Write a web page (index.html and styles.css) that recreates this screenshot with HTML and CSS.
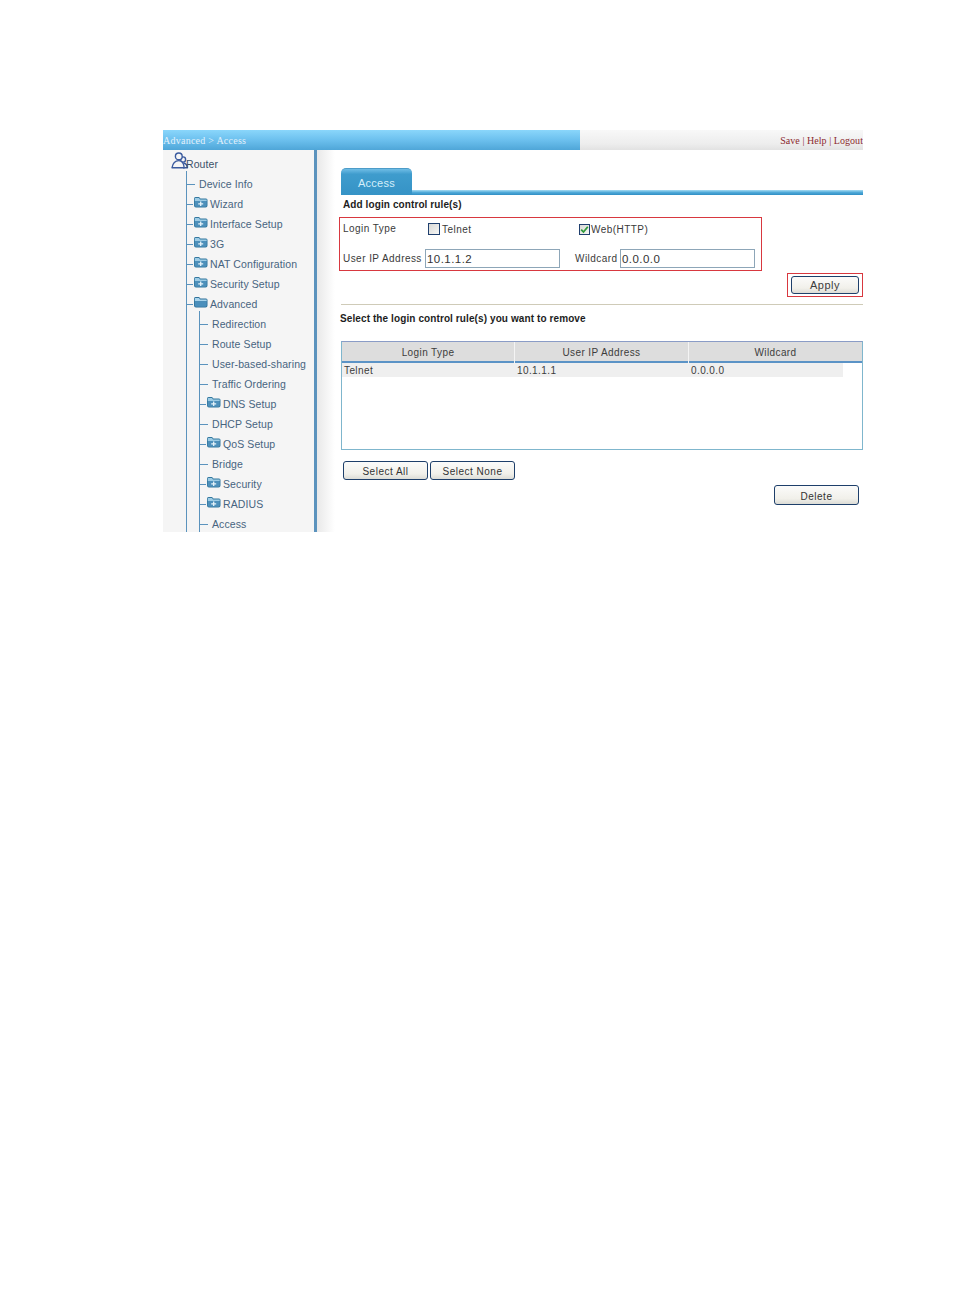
FILE: index.html
```html
<!DOCTYPE html>
<html lang="en">
<head>
<meta charset="utf-8">
<title>Advanced &gt; Access</title>
<link rel="stylesheet" href="styles.css">
</head>
<body>
<svg class="defs" width="0" height="0" aria-hidden="true">
  <symbol id="folder" viewBox="0 0 15 12">
    <path d="M1 2.5 Q1 1 2.5 1 H6 L7.5 2.5 H13 Q14.5 2.5 14.5 4 V9.5 Q14.5 11.5 12.5 11.5 H3 Q1 11.5 1 9.5 Z" fill="#34789f"/>
    <path d="M1.8 2 H6 L7 3.4 H13.7 V5 H1.8 Z" fill="#9ccbe4"/>
    <path d="M1.8 5 H13.7 V9.6 Q13.7 10.7 12.5 10.7 H3 Q1.8 10.7 1.8 9.6 Z" fill="#4d90bb"/>
    <path d="M5.2 7.8 H10.2 M7.7 5.6 V10" stroke="#e6f3fa" stroke-width="1.3" fill="none"/>
  </symbol>
  <symbol id="folder-open" viewBox="0 0 15 12">
    <path d="M1 2.5 Q1 1 2.5 1 H6 L7.5 2.5 H13 Q14.5 2.5 14.5 4 V9.5 Q14.5 11.5 12.5 11.5 H3 Q1 11.5 1 9.5 Z" fill="#2f7199"/>
    <path d="M1.8 2 H6 L7 3.4 H13.7 V5.2 H1.8 Z" fill="#a8d4ec"/>
    <path d="M1.8 5.2 H13.7 V9.6 Q13.7 10.7 12.5 10.7 H3 Q1.8 10.7 1.8 9.6 Z" fill="#4a8fbc"/>
  </symbol>
</svg>
<div class="shot">
  <header class="topbar">
    <div class="crumb">Advanced &gt; Access</div>
    <div class="links">Save | Help | Logout</div>
  </header>
  <div class="body">
    <nav class="sidebar">
      <div class="root">
        <svg class="root-icon" width="17" height="17" viewBox="0 0 17 17">
          <g fill="none" stroke="#3a5a9e" stroke-width="1.4" stroke-linejoin="round">
            <circle cx="12" cy="7.5" r="2.6"/>
            <path d="M12.5 11 Q16 11.6 16.3 15.8 H12"/>
            <circle cx="7.8" cy="4.4" r="3.4" fill="#f5f5f5"/>
            <path d="M1 15.8 Q2.2 8.6 7.8 8.6 Q12.6 8.6 13.2 15.8 Z" fill="#f5f5f5"/>
          </g>
        </svg>
        <span>Router</span>
      </div>
      <ul class="tree">
        <li class="leaf"><i class="stub"></i>Device Info</li>
        <li class="dir"><i class="stub"></i><svg class="ico"><use href="#folder"/></svg>Wizard</li>
        <li class="dir"><i class="stub"></i><svg class="ico"><use href="#folder"/></svg>Interface Setup</li>
        <li class="dir"><i class="stub"></i><svg class="ico"><use href="#folder"/></svg>3G</li>
        <li class="dir"><i class="stub"></i><svg class="ico"><use href="#folder"/></svg>NAT Configuration</li>
        <li class="dir"><i class="stub"></i><svg class="ico"><use href="#folder"/></svg>Security Setup</li>
        <li class="dir"><i class="stub"></i><svg class="ico"><use href="#folder-open"/></svg>Advanced</li>
        <li>
          <ul class="tree sub">
            <li class="leaf"><i class="stub"></i>Redirection</li>
            <li class="leaf"><i class="stub"></i>Route Setup</li>
            <li class="leaf"><i class="stub"></i>User-based-sharing</li>
            <li class="leaf"><i class="stub"></i>Traffic Ordering</li>
            <li class="dir"><i class="stub"></i><svg class="ico"><use href="#folder"/></svg>DNS Setup</li>
            <li class="leaf"><i class="stub"></i>DHCP Setup</li>
            <li class="dir"><i class="stub"></i><svg class="ico"><use href="#folder"/></svg>QoS Setup</li>
            <li class="leaf"><i class="stub"></i>Bridge</li>
            <li class="dir"><i class="stub"></i><svg class="ico"><use href="#folder"/></svg>Security</li>
            <li class="dir"><i class="stub"></i><svg class="ico"><use href="#folder"/></svg>RADIUS</li>
            <li class="leaf"><i class="stub"></i>Access</li>
          </ul>
        </li>
      </ul>
    </nav>
    <main class="main">
      <div class="tabbar">
        <div class="tab">Access</div>
        <div class="tabline"></div>
      </div>
      <h2 class="title indent">Add login control rule(s)</h2>
      <form class="redbox form">
        <span class="lead">Login Type</span>
        <label class="check telnet"><i class="box"></i>Telnet</label>
        <label class="check web">
          <i class="box on"><svg width="9" height="9" viewBox="0 0 9 9"><path d="M1.2 4.6 L3.5 7 L7.8 1.8" fill="none" stroke="#2f9a3a" stroke-width="1.8"/></svg></i>Web(HTTP)
        </label>
        <span class="low">User IP Address</span>
        <div class="input">10.1.1.2</div>
        <span class="low">Wildcard</span>
        <div class="input">0.0.0.0</div>
      </form>
      <div class="redbox applybox"><button class="btn apply" type="button">Apply</button></div>
      <div class="rule"></div>
      <h2 class="title second">Select the login control rule(s) you want to remove</h2>
      <div class="table">
        <div class="thead"><div>Login Type</div><div>User IP Address</div><div>Wildcard</div></div>
        <div class="trow"><div>Telnet</div><div>10.1.1.1</div><div>0.0.0.0</div></div>
      </div>
      <div class="selects">
        <button class="btn select" type="button">Select All</button>
        <button class="btn select" type="button">Select None</button>
      </div>
      <div class="deleterow"><button class="btn delete" type="button">Delete</button></div>
    </main>
  </div>
</div>
</body>
</html>
```
FILE: styles.css
```css
* { box-sizing: border-box; }
html, body { margin: 0; padding: 0; background: #fff; }
body { height: 1296px; font-family: "Liberation Sans", Arial, sans-serif; overflow: hidden; }
.defs { position: absolute; }

.shot {
  width: 700px; height: 402px; margin: 130px 0 0 163px;
  overflow: hidden; display: flex; flex-direction: column;
}

.topbar { height: 20px; flex: none; display: flex; font-family: "Liberation Serif", serif; }
.crumb {
  width: 417px; padding-top: 4px; font-size: 10px; line-height: 13px; letter-spacing: .25px; color: #e3f1fb;
  background: linear-gradient(#8ad6fb, #6cc0ee 50%, #4fa6d8);
}
.links {
  flex: 1; text-align: right; padding-top: 4px; font-size: 10px; line-height: 13px; letter-spacing: .05px; color: #8c2a2e;
  background: linear-gradient(#f8f8f8, #ededed 70%, #e2e2e2);
  white-space: nowrap;
}

.body { flex: 1; display: flex; min-height: 0; }

.sidebar {
  width: 154px; flex: none; background: #f5f5f5;
  border-right: 3px solid #5b93bd;
  font-size: 10.5px; letter-spacing: .1px; color: #47647f;
}
.root { height: 24px; display: flex; align-items: flex-end; padding-left: 8px; color: #3a5068; }
.root-icon { flex: none; margin-bottom: 5px; }
.root span { margin-left: -2px; line-height: 14px; padding-bottom: 3px; }
.tree { list-style: none; margin: -3px 0 0 23px; padding: 3px 0 0; border-left: 1px solid #5b93bd; }
.tree.sub { margin-left: 12px; height: 300px; }
.tree li.leaf, .tree li.dir { height: 20px; display: flex; align-items: center; white-space: nowrap; }
.stub { flex: none; height: 1px; background: #5b93bd; }
.leaf .stub { width: 8px; margin-right: 4px; }
.dir .stub { width: 6px; }
.ico { flex: none; width: 15px; height: 12px; margin: -5px 2px 0 0; }

.main {
  flex: 1; padding: 18px 0 0 24px; min-width: 0;
  background: linear-gradient(90deg, #e9e9e9, #fff 18px);
}
.tabbar { display: flex; align-items: flex-end; height: 27px; }
.tab {
  width: 71px; height: 27px; border-radius: 5px 5px 0 0; padding-top: 8px;
  text-align: center; font-size: 11px; line-height: 13px; letter-spacing: .25px; color: #d4eefa;
  background: linear-gradient(#6fbde6, #3f9ccd 20%, #3593c6);
  border-top: 1px solid #4d9cc8;
}
.tabline { flex: 1; height: 5px; background: linear-gradient(#a6dcf3, #4fa9d8 50%, #2f8ec4); }

.title { margin: 0; font-size: 10px; line-height: 14px; font-weight: bold; letter-spacing: .1px; color: #1d1d1d; }
.title.indent { margin: 3px 0 0 2px; }
.title.second { margin: 7px 0 0 -1px; }

.redbox { border: 1px solid #d8383f; }
.form {
  width: 423px; height: 54px; margin: 5px 0 0 -2px; padding: 0 0 0 3px;
  display: grid; grid-template-columns: 82px 150px 45px 134px; grid-template-rows: 22px 30px; align-items: center;
  font-size: 10px; letter-spacing: .45px; color: #3a3a3a;
}
.form > span { white-space: nowrap; }
.lead { margin-bottom: 2px; }
.low { margin-top: 6px; }
.check { display: flex; align-items: center; white-space: nowrap; }
.telnet { margin-left: 3px; }
.web { margin-left: 4px; grid-column: span 2; }
.box {
  width: 12px; height: 12px; margin-right: 2px; flex: none; border: 1px solid #1f3f6e;
  background: linear-gradient(135deg, #d9d9d6, #f6f6f4);
  display: flex; align-items: center; justify-content: center;
}
.box.on { width: 11px; height: 11px; margin-right: 1px; }
.input {
  width: 135px; height: 19px; margin-top: 7px; border: 1px solid #8da6b8; background: #fff; padding: 0 1px;
  font-size: 11.5px; line-height: 18px; color: #333;
}

.applybox { width: 76px; height: 24px; margin: 2px 0 0 446px; display: flex; align-items: center; justify-content: center; }

.btn {
  font-family: "Liberation Sans", Arial, sans-serif; font-size: 10px; letter-spacing: .5px; color: #333; padding: 0;
  border: 1px solid #1e3f6a; border-radius: 3px; background: linear-gradient(#fbfbfa, #f1f0ea 70%, #dcdcd6);
  display: block;
}
.apply { width: 68px; height: 18px; font-size: 11px; color: #3c3c3c; }
.select { width: 85px; height: 19px; padding-top: 2px; }
.delete { width: 85px; height: 20px; padding-top: 2px; }

.rule { height: 1px; margin-top: 7px; background: #cfcbb8; }

.table { height: 109px; margin-top: 15px; border: 1px solid #7fb6cd; border-top-color: #8a9cc6; background: #fff; font-size: 10px; letter-spacing: .4px; color: #3c3c3c; }
.thead {
  display: grid; grid-template-columns: 172px 174px 1fr; height: 21px;
  background: #dddddd; border-bottom: 2px solid #5b93c6; line-height: 22px; text-align: center;
}
.thead > div + div { border-left: 1px solid #f4f4f4; }
.trow { display: grid; grid-template-columns: 173px 174px 1fr; width: 501px; height: 14px; background: #efefef; line-height: 15px; }
.trow > div { padding-left: 2px; }

.selects { display: flex; gap: 2px; margin: 11px 0 0 2px; }
.deleterow { display: flex; justify-content: flex-end; margin: 5px 4px 0 0; }
```
